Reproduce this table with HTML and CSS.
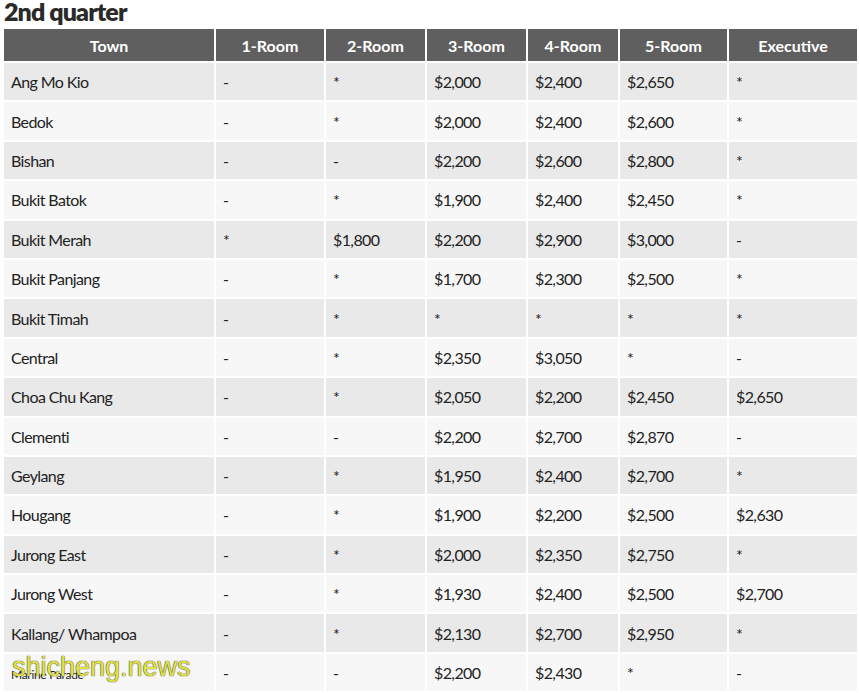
FILE: index.html
```html
<!DOCTYPE html>
<html>
<head>
<meta charset="utf-8">
<link rel="stylesheet" href="styles.css">
</head>
<body>
<div class="page">
  <h2 class="title">2nd quarter</h2>
  <table class="rent">
    <colgroup>
      <col class="c-town"><col class="c-1"><col class="c-2"><col class="c-3"><col class="c-4"><col class="c-5"><col class="c-ex">
    </colgroup>
    <thead>
      <tr><th>Town</th><th>1-Room</th><th>2-Room</th><th>3-Room</th><th>4-Room</th><th>5-Room</th><th>Executive</th></tr>
    </thead>
    <tbody>
      <tr><td>Ang Mo Kio</td><td>-</td><td>*</td><td>$2,000</td><td>$2,400</td><td>$2,650</td><td>*</td></tr>
      <tr><td>Bedok</td><td>-</td><td>*</td><td>$2,000</td><td>$2,400</td><td>$2,600</td><td>*</td></tr>
      <tr><td>Bishan</td><td>-</td><td>-</td><td>$2,200</td><td>$2,600</td><td>$2,800</td><td>*</td></tr>
      <tr><td>Bukit Batok</td><td>-</td><td>*</td><td>$1,900</td><td>$2,400</td><td>$2,450</td><td>*</td></tr>
      <tr><td>Bukit Merah</td><td>*</td><td>$1,800</td><td>$2,200</td><td>$2,900</td><td>$3,000</td><td>-</td></tr>
      <tr><td>Bukit Panjang</td><td>-</td><td>*</td><td>$1,700</td><td>$2,300</td><td>$2,500</td><td>*</td></tr>
      <tr><td>Bukit Timah</td><td>-</td><td>*</td><td>*</td><td>*</td><td>*</td><td>*</td></tr>
      <tr><td>Central</td><td>-</td><td>*</td><td>$2,350</td><td>$3,050</td><td>*</td><td>-</td></tr>
      <tr><td>Choa Chu Kang</td><td>-</td><td>*</td><td>$2,050</td><td>$2,200</td><td>$2,450</td><td>$2,650</td></tr>
      <tr><td>Clementi</td><td>-</td><td>-</td><td>$2,200</td><td>$2,700</td><td>$2,870</td><td>-</td></tr>
      <tr><td>Geylang</td><td>-</td><td>*</td><td>$1,950</td><td>$2,400</td><td>$2,700</td><td>*</td></tr>
      <tr><td>Hougang</td><td>-</td><td>*</td><td>$1,900</td><td>$2,200</td><td>$2,500</td><td>$2,630</td></tr>
      <tr><td>Jurong East</td><td>-</td><td>*</td><td>$2,000</td><td>$2,350</td><td>$2,750</td><td>*</td></tr>
      <tr><td>Jurong West</td><td>-</td><td>*</td><td>$1,930</td><td>$2,400</td><td>$2,500</td><td>$2,700</td></tr>
      <tr><td>Kallang/ Whampoa</td><td>-</td><td>*</td><td>$2,130</td><td>$2,700</td><td>$2,950</td><td>*</td></tr>
      <tr><td><span class="small">Marine Parade</span></td><td>-</td><td>-</td><td>$2,200</td><td>$2,430</td><td>*</td><td>-</td></tr>
    </tbody>
  </table>
  <div class="watermark">shicheng.news</div>
</div>
</body>
</html>
```
FILE: styles.css
```css
html, body {
  margin: 0;
  padding: 0;
  background: #ffffff;
}
body {
  font-family: Lato, "Open Sans", sans-serif;
  color: #222222;
  overflow: hidden;
}
.page {
  position: relative;
  padding: 0 2px 0 2px;
}
.title {
  margin: -7px 0 0 2px;
  font-size: 25px;
  font-weight: 800;
  letter-spacing: -0.9px;
  color: #2a2a2a;
  line-height: 36px;
  height: 34px;
}
.rent {
  width: 855px;
  border-collapse: collapse;
  table-layout: fixed;
  font-size: 16px;
}
.c-town { width: 212px; }
.c-1 { width: 110px; }
.c-2 { width: 101px; }
.c-3 { width: 101px; }
.c-4 { width: 92px; }
.c-5 { width: 109px; }
.c-ex { width: 130px; }
.rent th, .rent td {
  border: 2px solid #ffffff;
  padding: 0 7px;
  text-align: left;
}
.rent th {
  background: #5f5f5f;
  color: #ffffff;
  font-weight: 700;
  text-align: center;
  height: 32px;
  vertical-align: middle;
}
.rent td {
  height: 37.4px;
  vertical-align: middle;
  letter-spacing: -0.6px;
}
.rent tbody tr:nth-child(odd) td { background: #e9e9e9; }
.rent tbody tr:nth-child(even) td { background: #f7f7f7; }
.small {
  font-size: 12px;
  letter-spacing: -0.3px;
}
.watermark {
  position: absolute;
  left: 12px;
  top: 659px;
  font-family: "Liberation Sans", Arial, sans-serif;
  font-size: 27px;
  color: #e2e23a;
  text-shadow: 0 0 1px #444, 0 0 1px #444;
}
```
